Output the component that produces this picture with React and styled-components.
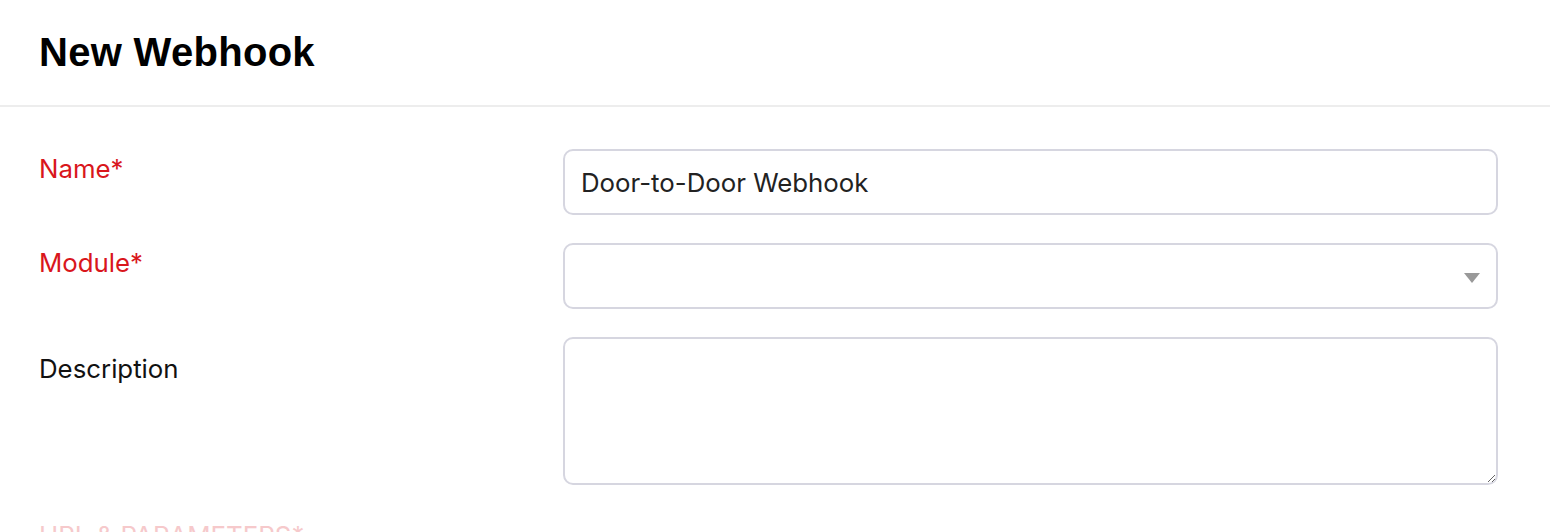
import React from 'react';
import styled, { createGlobalStyle } from 'styled-components';

const GlobalStyle = createGlobalStyle`
	body {
		margin: 0;
		background: #fff;
		font-family: Inter, "Noto Sans", sans-serif;
	}
`;

const App = () => (
	<Page>
		<GlobalStyle />
		<Header>
			<Title>New Webhook</Title>
		</Header>
		<Form>
			<Label required>Name*</Label>
			<TextInput defaultValue="Door-to-Door Webhook" />

			<Label required>Module*</Label>
			<SelectBox>
				<Caret />
			</SelectBox>

			<Label offset={17}>Description</Label>
			<TextArea />

			<SectionLabel>URL &amp; PARAMETERS*</SectionLabel>
		</Form>
	</Page>
);

const Page = styled.div`
	width: 1550px;
	height: 532px;
	overflow: hidden;
`;

const Header = styled.header`
	height: 105px;
	padding-left: 39px;
	display: flex;
	align-items: center;
	border-bottom: 2px solid #ededed;
`;

const Title = styled.h1`
	margin: 0;
	font-family: "Liberation Sans", Arial, sans-serif;
	font-size: 40px;
	font-weight: bold;
	letter-spacing: 0.3px;
	color: #000;
`;

const Form = styled.div`
	display: grid;
	grid-template-columns: 524px 935px;
	row-gap: 28px;
	padding: 42px 0 0 39px;
`;

const Label = styled.label`
	padding-top: ${(p) => p.offset || 5}px;
	font-size: 25.8px;
	line-height: 30px;
	color: ${(p) => (p.required ? '#d9161c' : '#111')};
`;

const fieldBase = `
	box-sizing: border-box;
	width: 100%;
	border: 2px solid #d6d6e0;
	border-radius: 10px;
	background: #fff;
	font-family: Inter, "Noto Sans", sans-serif;
	font-size: 25.8px;
	color: #222;
	outline: none;
`;

const TextInput = styled.input`
	${fieldBase}
	height: 66px;
	padding: 0 16px;
`;

const SelectBox = styled.div`
	${fieldBase}
	height: 66px;
	display: flex;
	align-items: center;
	justify-content: flex-end;
	padding-right: 16px;
`;

const Caret = styled.span`
	width: 0;
	height: 0;
	border-left: 8px solid transparent;
	border-right: 8px solid transparent;
	border-top: 10px solid #999;
	margin-top: 3px;
`;

const TextArea = styled.textarea`
	${fieldBase}
	height: 148px;
	padding: 12px 16px;
	display: block;
`;

const SectionLabel = styled.div`
	grid-column: 1 / -1;
	margin-top: 8px;
	font-size: 25.8px;
	line-height: 30px;
	color: #f6c9cb;
`;

export default App;
